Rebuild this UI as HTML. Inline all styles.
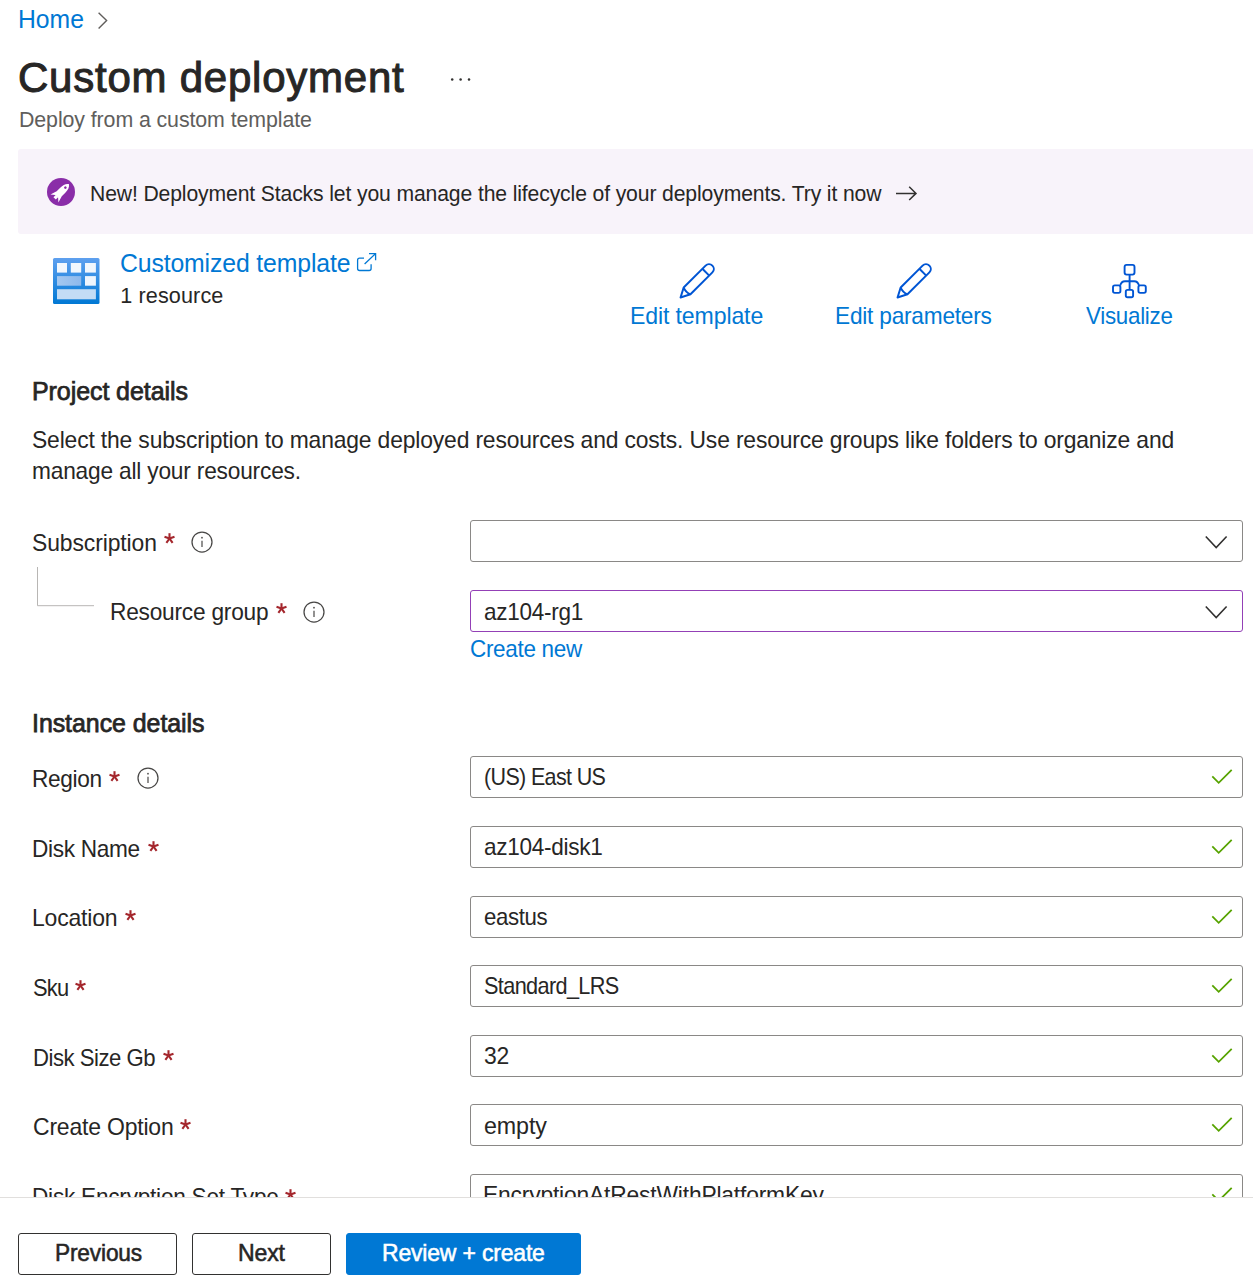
<!DOCTYPE html>
<html><head><meta charset="utf-8"><title>Custom deployment</title>
<style>
html,body{margin:0;padding:0;background:#fff;}
body{width:1253px;height:1280px;position:relative;overflow:hidden;font-family:"Liberation Sans",sans-serif;}
.t{position:absolute;white-space:nowrap;line-height:1;transform-origin:0 0;font-family:"Liberation Sans",sans-serif;}
.ic{position:absolute;overflow:visible;}
.box{position:absolute;left:470px;width:771px;height:40px;border:1px solid #8a8886;border-radius:3px;background:#fff;}
.banner{position:absolute;left:18px;top:149px;width:1240px;height:85px;background:#f8f3fa;border-radius:3px;}
.scrollarea{position:absolute;left:0;top:0;width:1253px;height:1197px;overflow:hidden;}
.footer{position:absolute;left:0;top:1197px;width:1253px;height:83px;background:#fff;border-top:1px solid #e1dfdd;}
.btn{position:absolute;top:1233px;height:40px;border:1px solid #323130;border-radius:3px;background:#fff;}
</style></head><body>
<div class="scrollarea">
<svg class="ic" style="left:95px;top:10px" width="16" height="22" viewBox="95 10 16 22"><path d="M98.6 12.8 L106.6 20.6 L98.6 28.4" fill="none" stroke="#605e5c" stroke-width="1.4"/></svg>
<svg class="ic" style="left:445px;top:70px" width="30" height="20" viewBox="445 70 30 20"><circle cx="452.2" cy="79.6" r="1.25" fill="#323130"/><circle cx="460.6" cy="79.6" r="1.25" fill="#323130"/><circle cx="469" cy="79.6" r="1.25" fill="#323130"/></svg>
<div class="banner"></div>
<svg class="ic" style="left:45px;top:176px" width="32" height="32" viewBox="45 176 32 32"><circle cx="61" cy="192" r="14" fill="#8a2da8"/><g transform="translate(61 192) rotate(-45)" fill="#fff"><path d="M11.2 0 C9.5 -2.6 6.5 -3.6 2.5 -3.6 L-2.5 -3.6 L-9.3 -5.6 L-6 -1.9 L-6 1.9 L-9.3 5.6 L-2.5 3.6 L2.5 3.6 C6.5 3.6 9.5 2.6 11.2 0 Z"/><rect x="-9" y="-1.7" width="3.5" height="3.4"/><circle cx="6.2" cy="0" r="1.3" fill="#8a2da8"/></g></svg>
<svg class="ic" style="left:890px;top:182px" width="32" height="22" viewBox="890 182 32 22"><path d="M896 193.4 L916 193.4 M909.2 186.8 L916 193.4 L909.2 200" fill="none" stroke="#323130" stroke-width="1.5"/></svg>
<svg class="ic" style="left:53px;top:258px" width="47" height="46" viewBox="0 0 47 46">
<defs><linearGradient id="tg" x1="0" y1="0" x2="0" y2="1"><stop offset="0" stop-color="#5ea0ef"/><stop offset="1" stop-color="#0078d4"/></linearGradient>
<linearGradient id="tg2" x1="0" y1="0" x2="1" y2="0"><stop offset="0" stop-color="#a4c8f0"/><stop offset="1" stop-color="#8db8ec"/></linearGradient></defs>
<rect x="0" y="0" width="46.5" height="46" rx="1.5" fill="url(#tg)"/>
<rect x="4" y="5" width="10" height="9.6" fill="#f2f7fd"/><rect x="17.8" y="5" width="10.4" height="9.6" fill="#f2f7fd"/><rect x="32" y="5" width="10.9" height="9.6" fill="#f2f7fd"/>
<rect x="4" y="18.1" width="24.2" height="9.6" fill="url(#tg2)"/><rect x="32" y="18.1" width="10.9" height="9.6" fill="#eef5fd"/>
<rect x="4" y="31.2" width="38.9" height="10.1" fill="#c3dcf5"/>
</svg>
<svg class="ic" style="left:354px;top:250px" width="26" height="24" viewBox="354 250 26 24"><path d="M364 258.2 L359.6 258.2 Q357.6 258.2 357.6 260.2 L357.6 268.5 Q357.6 270.5 359.6 270.5 L369.1 270.5 Q371.1 270.5 371.1 268.5 L371.1 264.2" fill="none" stroke="#0078d4" stroke-width="1.3"/><path d="M364.6 264 L375.6 253.6 M369 253.6 L375.6 253.6 L375.6 260.2" fill="none" stroke="#0078d4" stroke-width="1.3"/></svg>
<svg class="ic" style="left:676px;top:258px" width="44" height="44" viewBox="-4 -40 44 44"><g transform="rotate(-45)" fill="none" stroke="#0055d4" stroke-width="2" stroke-linejoin="round"><path d="M0.8 0 L10 -4.8 L41 -4.8 A4.8 4.8 0 0 1 41 4.8 L10 4.8 Z"/><path d="M36.5 -4.8 L36.5 4.8"/><path d="M10 -4.8 Q8 0 10 4.8"/></g></svg>
<svg class="ic" style="left:893px;top:258px" width="44" height="44" viewBox="-4 -40 44 44"><g transform="rotate(-45)" fill="none" stroke="#0055d4" stroke-width="2" stroke-linejoin="round"><path d="M0.8 0 L10 -4.8 L41 -4.8 A4.8 4.8 0 0 1 41 4.8 L10 4.8 Z"/><path d="M36.5 -4.8 L36.5 4.8"/><path d="M10 -4.8 Q8 0 10 4.8"/></g></svg>
<svg class="ic" style="left:1108px;top:260px" width="44" height="44" viewBox="1108 260 44 44"><g fill="none" stroke="#0055d4" stroke-width="1.9"><rect x="1124.6" y="264.9" width="9.9" height="9.7" rx="2"/><rect x="1113" y="285.4" width="7.4" height="7.5" rx="1.8"/><rect x="1138.4" y="285.4" width="7.4" height="7.5" rx="1.8"/><rect x="1125.8" y="289.9" width="7.3" height="7.4" rx="1.8"/><path d="M1129.6 274.6 L1129.6 289.9"/><path d="M1120.2 285.6 Q1121.2 281.2 1125 281.2 L1134.2 281.2 Q1138 281.2 1139 285.6"/></g></svg>
<svg class="ic" style="left:30px;top:560px" width="70" height="50" viewBox="30 560 70 50"><path d="M37.5 567 L37.5 605.7 L94 605.7" fill="none" stroke="#b8b6b4" stroke-width="1"/></svg>
<div class="box" style="top:520px;border-color:#8a8886"></div>
<div class="box" style="top:590px;border-color:#9340b6"></div>
<div class="box" style="top:756px;border-color:#8a8886"></div>
<div class="box" style="top:826px;border-color:#8a8886"></div>
<div class="box" style="top:896px;border-color:#8a8886"></div>
<div class="box" style="top:965px;border-color:#8a8886"></div>
<div class="box" style="top:1035px;border-color:#8a8886"></div>
<div class="box" style="top:1104px;border-color:#8a8886"></div>
<div class="box" style="top:1174px;border-color:#8a8886"></div>
<svg class="ic" style="left:1200px;top:530px" width="34" height="24" viewBox="1200 530 34 24"><path d="M1205.8 536.5 L1216.2 547.5 L1226.6 536.5" fill="none" stroke="#323130" stroke-width="1.6"/></svg><svg class="ic" style="left:1200px;top:600px" width="34" height="24" viewBox="1200 530 34 24"><path d="M1205.8 536.5 L1216.2 547.5 L1226.6 536.5" fill="none" stroke="#323130" stroke-width="1.6"/></svg>
<svg class="ic" style="left:1205px;top:760px" width="34" height="30" viewBox="1205 760 34 30"><path d="M1212.3 776.4 L1218.7 782.8 L1231.7 769.8" fill="none" stroke="#57a300" stroke-width="1.8" stroke-linecap="butt"/></svg>
<svg class="ic" style="left:1205px;top:830px" width="34" height="30" viewBox="1205 760 34 30"><path d="M1212.3 776.4 L1218.7 782.8 L1231.7 769.8" fill="none" stroke="#57a300" stroke-width="1.8" stroke-linecap="butt"/></svg>
<svg class="ic" style="left:1205px;top:900px" width="34" height="30" viewBox="1205 760 34 30"><path d="M1212.3 776.4 L1218.7 782.8 L1231.7 769.8" fill="none" stroke="#57a300" stroke-width="1.8" stroke-linecap="butt"/></svg>
<svg class="ic" style="left:1205px;top:969px" width="34" height="30" viewBox="1205 760 34 30"><path d="M1212.3 776.4 L1218.7 782.8 L1231.7 769.8" fill="none" stroke="#57a300" stroke-width="1.8" stroke-linecap="butt"/></svg>
<svg class="ic" style="left:1205px;top:1039px" width="34" height="30" viewBox="1205 760 34 30"><path d="M1212.3 776.4 L1218.7 782.8 L1231.7 769.8" fill="none" stroke="#57a300" stroke-width="1.8" stroke-linecap="butt"/></svg>
<svg class="ic" style="left:1205px;top:1108px" width="34" height="30" viewBox="1205 760 34 30"><path d="M1212.3 776.4 L1218.7 782.8 L1231.7 769.8" fill="none" stroke="#57a300" stroke-width="1.8" stroke-linecap="butt"/></svg>
<svg class="ic" style="left:1205px;top:1178px" width="34" height="30" viewBox="1205 760 34 30"><path d="M1212.3 776.4 L1218.7 782.8 L1231.7 769.8" fill="none" stroke="#57a300" stroke-width="1.8" stroke-linecap="butt"/></svg>
<svg class="ic" style="left:164px;top:533px" width="11" height="11" viewBox="-5.5 -5.5 11 11"><g stroke="#a4262c" stroke-width="2.1" stroke-linecap="butt"><line x1="0" y1="0" x2="0" y2="-5.3"/><line x1="0" y1="0" x2="5.0" y2="-1.7"/><line x1="0" y1="0" x2="-5.0" y2="-1.7"/><line x1="0" y1="0" x2="3.1" y2="4.3"/><line x1="0" y1="0" x2="-3.1" y2="4.3"/></g></svg><svg class="ic" style="left:276px;top:603px" width="11" height="11" viewBox="-5.5 -5.5 11 11"><g stroke="#a4262c" stroke-width="2.1" stroke-linecap="butt"><line x1="0" y1="0" x2="0" y2="-5.3"/><line x1="0" y1="0" x2="5.0" y2="-1.7"/><line x1="0" y1="0" x2="-5.0" y2="-1.7"/><line x1="0" y1="0" x2="3.1" y2="4.3"/><line x1="0" y1="0" x2="-3.1" y2="4.3"/></g></svg><svg class="ic" style="left:109px;top:770.7px" width="11" height="11" viewBox="-5.5 -5.5 11 11"><g stroke="#a4262c" stroke-width="2.1" stroke-linecap="butt"><line x1="0" y1="0" x2="0" y2="-5.3"/><line x1="0" y1="0" x2="5.0" y2="-1.7"/><line x1="0" y1="0" x2="-5.0" y2="-1.7"/><line x1="0" y1="0" x2="3.1" y2="4.3"/><line x1="0" y1="0" x2="-3.1" y2="4.3"/></g></svg>
<svg class="ic" style="left:148px;top:840.8px" width="11" height="11" viewBox="-5.5 -5.5 11 11"><g stroke="#a4262c" stroke-width="2.1" stroke-linecap="butt"><line x1="0" y1="0" x2="0" y2="-5.3"/><line x1="0" y1="0" x2="5.0" y2="-1.7"/><line x1="0" y1="0" x2="-5.0" y2="-1.7"/><line x1="0" y1="0" x2="3.1" y2="4.3"/><line x1="0" y1="0" x2="-3.1" y2="4.3"/></g></svg>
<svg class="ic" style="left:125px;top:910.25px" width="11" height="11" viewBox="-5.5 -5.5 11 11"><g stroke="#a4262c" stroke-width="2.1" stroke-linecap="butt"><line x1="0" y1="0" x2="0" y2="-5.3"/><line x1="0" y1="0" x2="5.0" y2="-1.7"/><line x1="0" y1="0" x2="-5.0" y2="-1.7"/><line x1="0" y1="0" x2="3.1" y2="4.3"/><line x1="0" y1="0" x2="-3.1" y2="4.3"/></g></svg>
<svg class="ic" style="left:75px;top:980.25px" width="11" height="11" viewBox="-5.5 -5.5 11 11"><g stroke="#a4262c" stroke-width="2.1" stroke-linecap="butt"><line x1="0" y1="0" x2="0" y2="-5.3"/><line x1="0" y1="0" x2="5.0" y2="-1.7"/><line x1="0" y1="0" x2="-5.0" y2="-1.7"/><line x1="0" y1="0" x2="3.1" y2="4.3"/><line x1="0" y1="0" x2="-3.1" y2="4.3"/></g></svg>
<svg class="ic" style="left:163px;top:1049.5px" width="11" height="11" viewBox="-5.5 -5.5 11 11"><g stroke="#a4262c" stroke-width="2.1" stroke-linecap="butt"><line x1="0" y1="0" x2="0" y2="-5.3"/><line x1="0" y1="0" x2="5.0" y2="-1.7"/><line x1="0" y1="0" x2="-5.0" y2="-1.7"/><line x1="0" y1="0" x2="3.1" y2="4.3"/><line x1="0" y1="0" x2="-3.1" y2="4.3"/></g></svg>
<svg class="ic" style="left:180px;top:1119px" width="11" height="11" viewBox="-5.5 -5.5 11 11"><g stroke="#a4262c" stroke-width="2.1" stroke-linecap="butt"><line x1="0" y1="0" x2="0" y2="-5.3"/><line x1="0" y1="0" x2="5.0" y2="-1.7"/><line x1="0" y1="0" x2="-5.0" y2="-1.7"/><line x1="0" y1="0" x2="3.1" y2="4.3"/><line x1="0" y1="0" x2="-3.1" y2="4.3"/></g></svg>
<svg class="ic" style="left:285px;top:1188.8px" width="11" height="11" viewBox="-5.5 -5.5 11 11"><g stroke="#a4262c" stroke-width="2.1" stroke-linecap="butt"><line x1="0" y1="0" x2="0" y2="-5.3"/><line x1="0" y1="0" x2="5.0" y2="-1.7"/><line x1="0" y1="0" x2="-5.0" y2="-1.7"/><line x1="0" y1="0" x2="3.1" y2="4.3"/><line x1="0" y1="0" x2="-3.1" y2="4.3"/></g></svg>
<svg class="ic" style="left:190.4px;top:529.9px" width="24" height="24" viewBox="-12 -12 24 24"><circle cx="0" cy="0" r="10" fill="none" stroke="#484746" stroke-width="1.25"/><circle cx="0" cy="-4.3" r="0.85" fill="#484746"/><line x1="0" y1="-1.3" x2="0" y2="4.9" stroke="#484746" stroke-width="1.2"/></svg><svg class="ic" style="left:302.3px;top:599.8px" width="24" height="24" viewBox="-12 -12 24 24"><circle cx="0" cy="0" r="10" fill="none" stroke="#484746" stroke-width="1.25"/><circle cx="0" cy="-4.3" r="0.85" fill="#484746"/><line x1="0" y1="-1.3" x2="0" y2="4.9" stroke="#484746" stroke-width="1.2"/></svg><svg class="ic" style="left:135.5px;top:765.8px" width="24" height="24" viewBox="-12 -12 24 24"><circle cx="0" cy="0" r="10" fill="none" stroke="#484746" stroke-width="1.25"/><circle cx="0" cy="-4.3" r="0.85" fill="#484746"/><line x1="0" y1="-1.3" x2="0" y2="4.9" stroke="#484746" stroke-width="1.2"/></svg>
<div class="t" id="home" style="left:18.00px;top:6.50px;font-size:25.2px;font-weight:400;color:#0078d4;letter-spacing:0.0px;transform:scaleX(0.9814)">Home</div>
<div class="t" id="title" style="left:18.00px;top:56.80px;font-size:42px;font-weight:400;-webkit-text-stroke:1.0px #272625;color:#272625;letter-spacing:0.763px;transform:scaleX(1.0)">Custom deployment</div>
<div class="t" id="sub" style="left:18.50px;top:109.30px;font-size:21.6px;font-weight:400;color:#605e5c;letter-spacing:-0.101px;transform:scaleX(0.9895)">Deploy from a custom template</div>
<div class="t" id="banner" style="left:89.60px;top:182.80px;font-size:21.6px;font-weight:400;color:#272625;letter-spacing:-0.129px;transform:scaleX(0.9796)">New! Deployment Stacks let you manage the lifecycle of your deployments. Try it now</div>
<div class="t" id="ctpl" style="left:119.50px;top:250.80px;font-size:25.2px;font-weight:400;color:#0078d4;letter-spacing:-0.135px;transform:scaleX(0.9843)">Customized template</div>
<div class="t" id="res" style="left:120.30px;top:284.50px;font-size:21.6px;font-weight:400;color:#272625;letter-spacing:0.111px;transform:scaleX(1.0)">1 resource</div>
<div class="t" id="edtpl" style="left:630.10px;top:304.80px;font-size:23.4px;font-weight:400;color:#0078d4;letter-spacing:-0.118px;transform:scaleX(0.9861)">Edit template</div>
<div class="t" id="edpar" style="left:834.50px;top:304.60px;font-size:23.4px;font-weight:400;color:#0078d4;letter-spacing:-0.221px;transform:scaleX(0.9684)">Edit parameters</div>
<div class="t" id="vis" style="left:1086.00px;top:304.70px;font-size:23.4px;font-weight:400;color:#0078d4;letter-spacing:-0.288px;transform:scaleX(0.9555)">Visualize</div>
<div class="t" id="proj" style="left:32.30px;top:378.90px;font-size:25.2px;font-weight:400;-webkit-text-stroke:0.75px #272625;color:#272625;letter-spacing:-0.086px;transform:scaleX(0.9931)">Project details</div>
<div class="t" id="p1" style="left:31.60px;top:428.90px;font-size:23.4px;font-weight:400;color:#272625;letter-spacing:-0.155px;transform:scaleX(0.9774)">Select the subscription to manage deployed resources and costs. Use resource groups like folders to organize and</div>
<div class="t" id="p2" style="left:31.60px;top:459.50px;font-size:23.4px;font-weight:400;color:#272625;letter-spacing:-0.19px;transform:scaleX(0.9699)">manage all your resources.</div>
<div class="t" id="lsub" style="left:31.80px;top:531.80px;font-size:23.4px;font-weight:400;color:#272625;letter-spacing:-0.093px;transform:scaleX(0.9786)">Subscription</div>
<div class="t" id="lrg" style="left:109.90px;top:600.70px;font-size:23.4px;font-weight:400;color:#272625;letter-spacing:-0.222px;transform:scaleX(0.9697)">Resource group</div>
<div class="t" id="vrg" style="left:484.00px;top:600.80px;font-size:23.4px;font-weight:400;color:#272625;letter-spacing:-0.286px;transform:scaleX(0.9632)">az104-rg1</div>
<div class="t" id="create" style="left:469.60px;top:637.50px;font-size:23.4px;font-weight:400;color:#0078d4;letter-spacing:-0.324px;transform:scaleX(0.9607)">Create new</div>
<div class="t" id="inst" style="left:31.60px;top:711.30px;font-size:25.2px;font-weight:400;-webkit-text-stroke:0.75px #272625;color:#272625;letter-spacing:-0.054px;transform:scaleX(0.9906)">Instance details</div>
<div class="t" id="lreg" style="left:31.60px;top:767.70px;font-size:23.4px;font-weight:400;color:#272625;letter-spacing:-0.372px;transform:scaleX(0.9684)">Region</div>
<div class="t" id="ldisk" style="left:31.60px;top:837.80px;font-size:23.4px;font-weight:400;color:#272625;letter-spacing:-0.336px;transform:scaleX(0.9681)">Disk Name</div>
<div class="t" id="lloc" style="left:31.60px;top:907.25px;font-size:23.4px;font-weight:400;color:#272625;letter-spacing:-0.203px;transform:scaleX(0.9833)">Location</div>
<div class="t" id="lsku" style="left:32.60px;top:977.25px;font-size:23.4px;font-weight:400;color:#272625;letter-spacing:-0.75px;transform:scaleX(0.9338)">Sku</div>
<div class="t" id="lsize" style="left:32.60px;top:1046.50px;font-size:23.4px;font-weight:400;color:#272625;letter-spacing:-0.519px;transform:scaleX(0.9467)">Disk Size Gb</div>
<div class="t" id="lopt" style="left:32.60px;top:1116.00px;font-size:23.4px;font-weight:400;color:#272625;letter-spacing:-0.204px;transform:scaleX(0.9827)">Create Option</div>
<div class="t" id="lenc" style="left:31.60px;top:1185.80px;font-size:23.4px;font-weight:400;color:#272625;letter-spacing:-0.243px;transform:scaleX(0.9668)">Disk Encryption Set Type</div>
<div class="t" id="vreg" style="left:484.30px;top:765.60px;font-size:23.4px;font-weight:400;color:#272625;letter-spacing:-0.693px;transform:scaleX(0.9179)">(US) East US</div>
<div class="t" id="vdisk" style="left:484.00px;top:835.80px;font-size:23.4px;font-weight:400;color:#272625;letter-spacing:-0.29px;transform:scaleX(0.9647)">az104-disk1</div>
<div class="t" id="vloc" style="left:484.00px;top:905.90px;font-size:23.4px;font-weight:400;color:#272625;letter-spacing:-0.379px;transform:scaleX(0.9488)">eastus</div>
<div class="t" id="vsku" style="left:484.00px;top:974.60px;font-size:23.4px;font-weight:400;color:#272625;letter-spacing:-0.686px;transform:scaleX(0.9272)">Standard_LRS</div>
<div class="t" id="vsize" style="left:484.00px;top:1045.00px;font-size:23.4px;font-weight:400;color:#272625;letter-spacing:-0.204px;transform:scaleX(0.9799)">32</div>
<div class="t" id="vopt" style="left:484.00px;top:1114.50px;font-size:23.4px;font-weight:400;color:#272625;letter-spacing:-0.101px;transform:scaleX(0.9943)">empty</div>
<div class="t" id="venc" style="left:483.00px;top:1183.50px;font-size:23.4px;font-weight:400;color:#272625;letter-spacing:-0.184px;transform:scaleX(0.9758)">EncryptionAtRestWithPlatformKey</div>
</div>
<div class="footer"></div>
<div class="btn" style="left:18px;width:157px"></div>
<div class="btn" style="left:192px;width:137px"></div>
<div class="btn" style="left:346px;width:233px;background:#0078d4;border-color:#0078d4"></div>
<div class="t" id="bprev" style="left:54.50px;top:1241.90px;font-size:23.4px;font-weight:400;-webkit-text-stroke:0.55px #272625;color:#272625;letter-spacing:-0.177px;transform:scaleX(0.9711)">Previous</div>
<div class="t" id="bnext" style="left:237.70px;top:1241.90px;font-size:23.4px;font-weight:400;-webkit-text-stroke:0.55px #272625;color:#272625;letter-spacing:-0.135px;transform:scaleX(0.9862)">Next</div>
<div class="t" id="brev" style="left:381.80px;top:1241.90px;font-size:23.4px;font-weight:400;-webkit-text-stroke:0.55px #ffffff;color:#ffffff;letter-spacing:-0.175px;transform:scaleX(0.9816)">Review + create</div>
</body></html>
